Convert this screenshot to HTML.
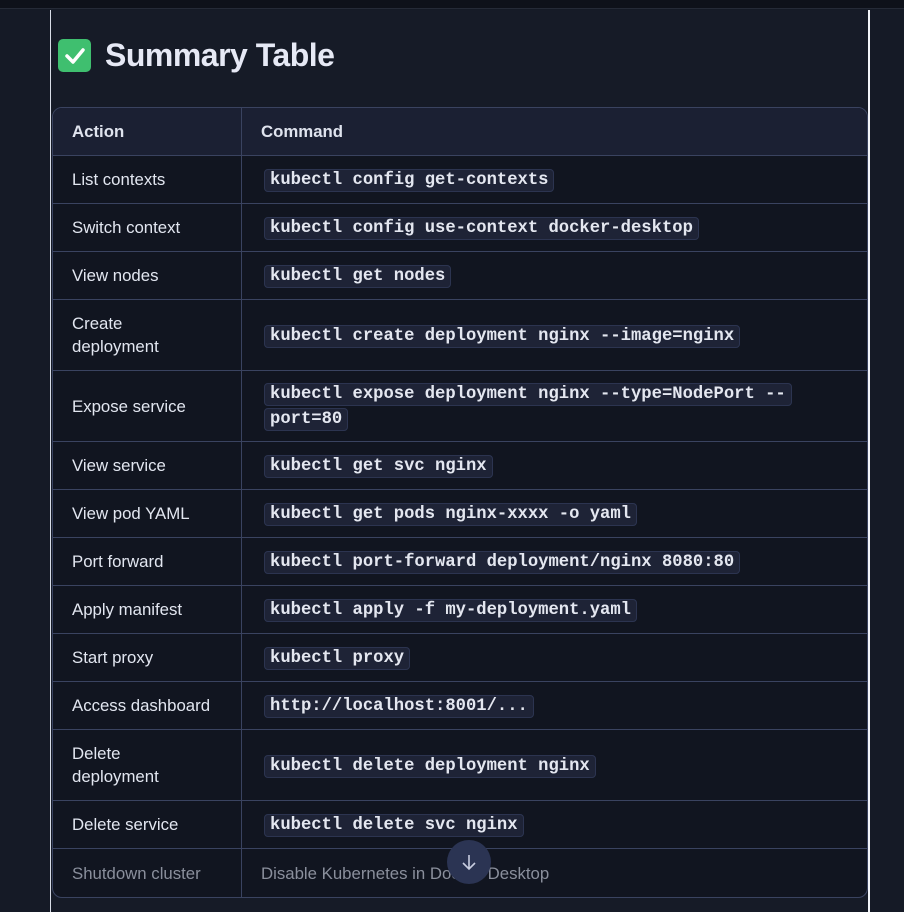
<!DOCTYPE html>
<html><head><meta charset="utf-8"><style>
*{box-sizing:border-box;margin:0;padding:0}
html,body{width:904px;height:912px;overflow:hidden;background:#151a26;font-family:"Liberation Sans",sans-serif;color:#e2e6f0}
.top{position:absolute;left:0;top:0;width:904px;height:9px;background:#0e111a;border-bottom:1px solid #252a37}
.panel{position:absolute;left:50px;top:10px;width:820px;height:902px;background:#161b27;border-left:1px solid #d8dce6;border-right:2px solid #f2f4f8}
h1{position:absolute;left:58px;top:37px;font-size:32px;font-weight:bold;color:#e6e9f5;letter-spacing:-0.5px;display:flex;align-items:center}
.chk{width:33px;height:33px;border-radius:5px;background:#3fbf6f;margin-right:14px;display:flex;align-items:center;justify-content:center}
table{position:absolute;left:52px;top:107px;width:816px;border-collapse:separate;border-spacing:0;border:1px solid #3a4360;border-radius:10px;overflow:hidden;background:#111520}
td,th{border-bottom:1px solid #3a4360;padding:0 19px;font-size:16.8px;line-height:23px;text-align:left;vertical-align:middle}
th{background:#1b2033;height:48px;font-weight:bold;color:#dfe3ee}
td:first-child,th:first-child{width:189px;border-right:1px solid #3a4360}
tr:last-child td{border-bottom:none}
td{height:48px}
tr.t td{height:71px}
tr.t2 td{height:71px}
code{font-family:"Liberation Mono",monospace;font-size:17.2px;font-weight:bold;background:#1e2336;border:1px solid #2c3450;border-radius:4px;padding:1px 5px;margin-left:3px;color:#e4e7f0;-webkit-box-decoration-break:clone;box-decoration-break:clone}
code.w{margin-left:3px}
tr.dim td{color:#8a8f9c}
.btn{position:absolute;left:447px;top:840px;width:44px;height:44px;border-radius:50%;background:#2b3453;display:flex;align-items:center;justify-content:center}
</style></head><body>
<div class="top"></div>
<div class="panel"></div>
<h1><span class="chk"><svg width="22" height="22" viewBox="0 0 22 22"><path d="M3 11l6 6L19 5" stroke="#fff" stroke-width="3.5" fill="none" stroke-linecap="round" stroke-linejoin="round"/></svg></span>Summary Table</h1>
<table>
<tr><th>Action</th><th>Command</th></tr>
<tr><td>List contexts</td><td><code>kubectl config get-contexts</code></td></tr>
<tr><td>Switch context</td><td><code>kubectl config use-context docker-desktop</code></td></tr>
<tr><td>View nodes</td><td><code>kubectl get nodes</code></td></tr>
<tr class="t"><td>Create<br>deployment</td><td><code>kubectl create deployment nginx --image=nginx</code></td></tr>
<tr class="t2"><td>Expose service</td><td><code>kubectl expose deployment nginx --type=NodePort --<br>port=80</code></td></tr>
<tr><td>View service</td><td><code>kubectl get svc nginx</code></td></tr>
<tr><td>View pod YAML</td><td><code>kubectl get pods nginx-xxxx -o yaml</code></td></tr>
<tr><td>Port forward</td><td><code>kubectl port-forward deployment/nginx 8080:80</code></td></tr>
<tr><td>Apply manifest</td><td><code>kubectl apply -f my-deployment.yaml</code></td></tr>
<tr><td>Start proxy</td><td><code>kubectl proxy</code></td></tr>
<tr><td>Access dashboard</td><td><code>http://localhost:8001/...</code></td></tr>
<tr class="t"><td>Delete<br>deployment</td><td><code>kubectl delete deployment nginx</code></td></tr>
<tr><td>Delete service</td><td><code>kubectl delete svc nginx</code></td></tr>
<tr class="dim"><td>Shutdown cluster</td><td>Disable Kubernetes in Docker Desktop</td></tr>
</table>
<div class="btn"><svg width="20" height="20" viewBox="0 0 20 20"><path d="M10 3v14M4 11l6 6 6-6" stroke="#c8cde0" stroke-width="1.6" fill="none"/></svg></div>
</body></html>
